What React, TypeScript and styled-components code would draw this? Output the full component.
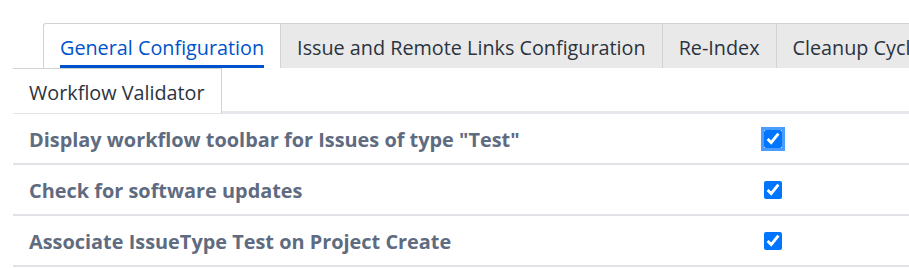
import styled, { createGlobalStyle } from 'styled-components';

const GlobalStyle = createGlobalStyle`
  body {
    margin: 0;
    background: #ffffff;
    font-family: 'Open Sans', 'Noto Sans', sans-serif;
  }
`;

const tabs = [
  'General Configuration',
  'Issue and Remote Links Configuration',
  'Re-Index',
  'Cleanup Cycles',
];

const settings = [
  { label: 'Display workflow toolbar for Issues of type "Test"', focused: true },
  { label: 'Check for software updates', focused: false },
  { label: 'Associate IssueType Test on Project Create', focused: false },
];

const App = () => {
  return (
    <Page>
      <GlobalStyle />
      <TabRow>
        {tabs.map((tab, i) => (
          <Tab key={tab} $active={i === 0}>
            <TabLabel $active={i === 0}>{tab}</TabLabel>
          </Tab>
        ))}
      </TabRow>
      <SubTabRow>
        <SubTab>Workflow Validator</SubTab>
        <SubTabFill />
      </SubTabRow>
      <Settings>
        {settings.map((s) => (
          <Row key={s.label}>
            <Label>{s.label}</Label>
            <CheckCell>
              <Check type="checkbox" defaultChecked $focused={s.focused} />
            </CheckCell>
          </Row>
        ))}
      </Settings>
    </Page>
  );
};

const Page = styled.div`
  width: 909px;
  height: 268px;
  overflow: hidden;
  padding: 23px 0 0 13px;
  box-sizing: border-box;
`;
const TabRow = styled.div`
  display: flex;
  padding-left: 30px;
  height: 45px;
  white-space: nowrap;
  overflow: hidden;
`;
const Tab = styled.div<{ $active: boolean }>`
  display: flex;
  align-items: flex-end;
  flex-shrink: 0;
  height: 44px;
  padding: 0 16px;
  border: 1px solid #d2d2d2;
  border-bottom: none;
  border-left-width: ${(p) => (p.$active ? '1px' : '0')};
  background: ${(p) => (p.$active ? '#ffffff' : '#e9e9e9')};
  border-radius: ${(p) => (p.$active ? '3px 0 0 0' : '0')};
`;
const TabLabel = styled.span<{ $active: boolean }>`
  font-size: 19.8px;
  line-height: 28px;
  padding-bottom: 3px;
  color: ${(p) => (p.$active ? '#0052cc' : '#2b3340')};
  border-bottom: 3px solid ${(p) => (p.$active ? '#0052cc' : 'transparent')};
`;
const SubTabRow = styled.div`
  display: flex;
  align-items: flex-end;
`;
const SubTab = styled.div`
  height: 46px;
  padding: 2px 16px 0 16px;
  box-sizing: border-box;
  display: flex;
  align-items: center;
  font-size: 19.8px;
  color: #2b3340;
  border-top: 1px solid #d2d2d2;
  border-right: 1px solid #d2d2d2;
  border-bottom: 1px solid #e2e3e6;
`;
const SubTabFill = styled.div`
  flex: 1;
  border-bottom: 3px solid #e7e8ec;
`;
const Settings = styled.div`
  display: flex;
  flex-direction: column;
`;
const Row = styled.div`
  display: grid;
  grid-template-columns: 720px 80px;
  align-items: center;
  height: 49px;
  border-bottom: 2px solid #e1e2e5;
`;
const Label = styled.div`
  padding-left: 16px;
  padding-top: 2px;
  font-size: 19.9px;
  font-weight: 700;
  color: #5f6b80;
`;
const CheckCell = styled.div`
  display: flex;
  justify-content: center;
`;
const Check = styled.input<{ $focused: boolean }>`
  width: 18px;
  height: 18px;
  margin: 0;
  accent-color: #0075ff;
  outline: ${(p) => (p.$focused ? '3px solid #4a9cff' : 'none')};
  outline-offset: 0;
`;

export default App;
